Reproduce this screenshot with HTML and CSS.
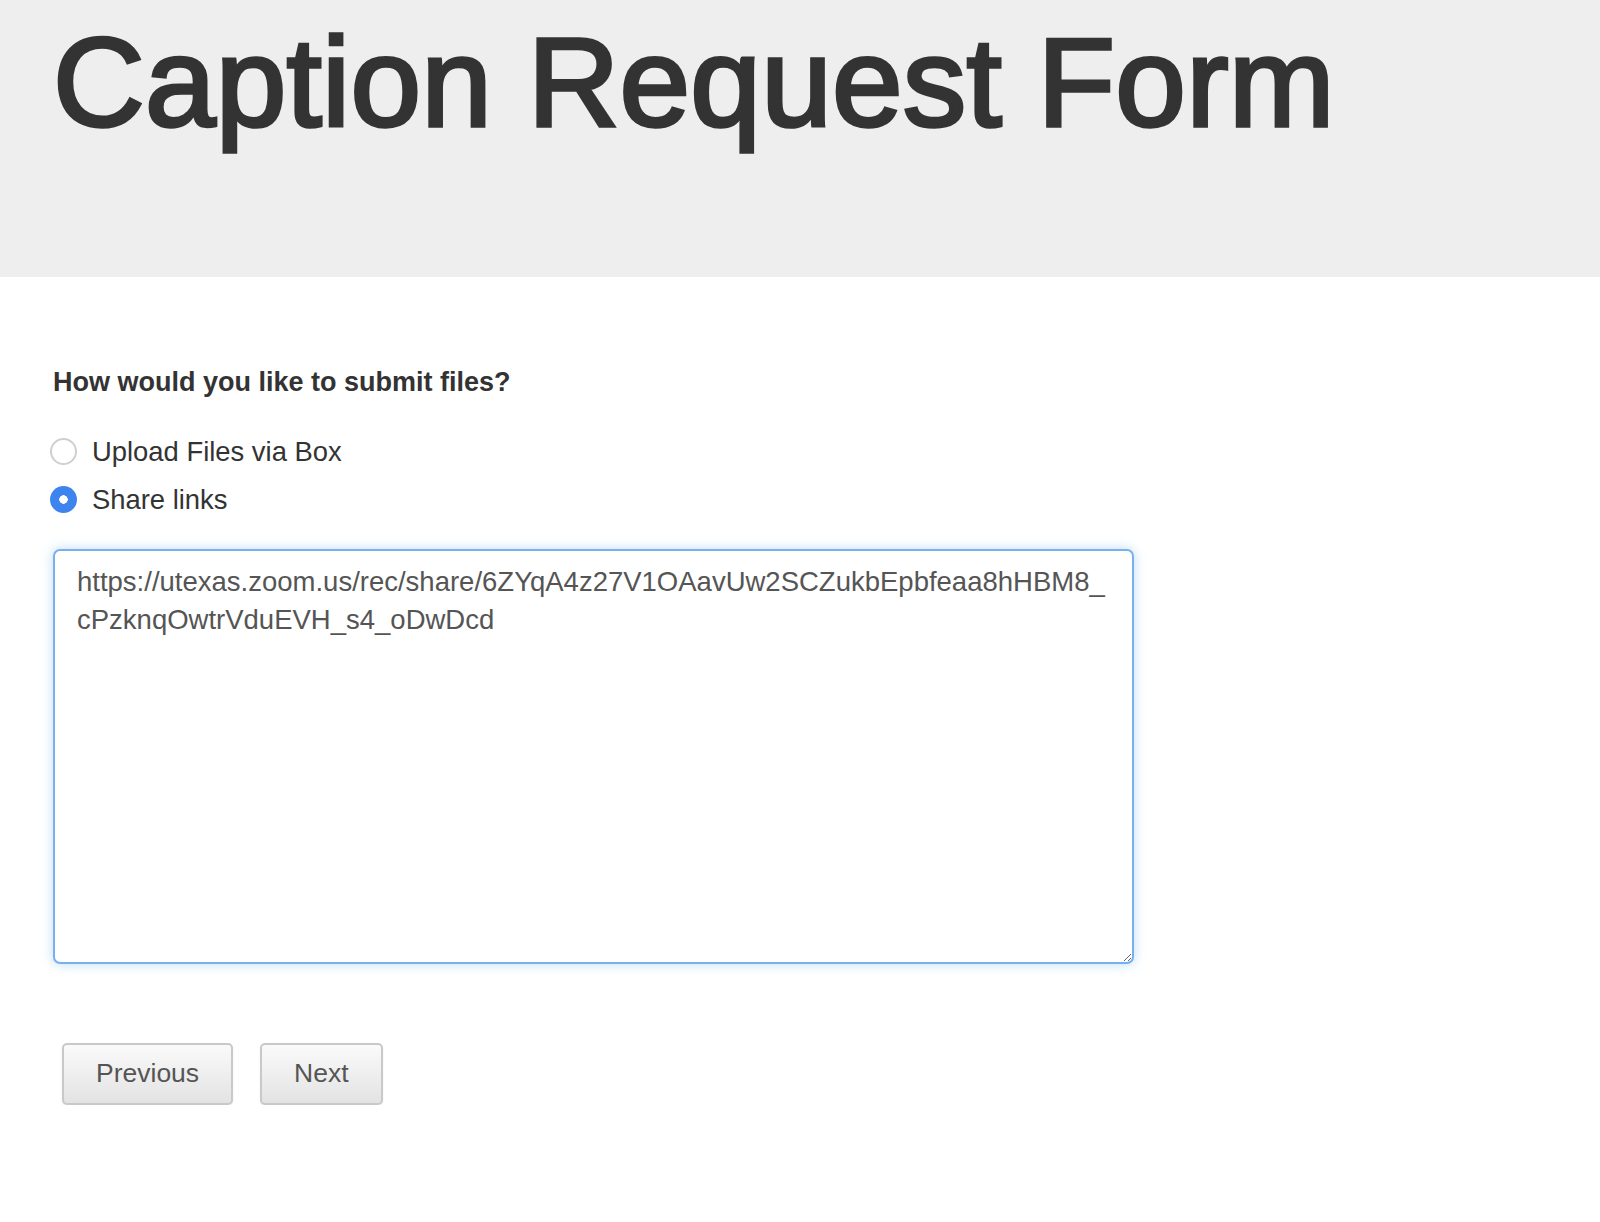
FILE: index.html
```
<!DOCTYPE html>
<html>
<head>
	<meta charset="utf-8">
	<title>Caption Request Form</title>
	<link rel="stylesheet" href="styles.css">
</head>
<body>
	<!-- 标题 -->
	<div class="jumbo">
		<h1>Caption Request Form</h1>
	</div>
	<div class="main">
		<form class="step">
			<label class="question">How would you like to submit files?</label>
			<div class="choices">
				<label class="choice"><input type="radio" name="how" value="box"><span>Upload Files via Box</span></label>
				<label class="choice"><input type="radio" name="how" value="links" checked><span>Share links</span></label>
			</div>
			<textarea class="links" name="links">https://utexas.zoom.us/rec/share/6ZYqA4z27V1OAavUw2SCZukbEpbfeaa8hHBM8_cPzknqOwtrVduEVH_s4_oDwDcd</textarea>
			<div class="nav">
				<input type="button" class="btn" value="Previous">
				<input type="button" class="btn" value="Next">
			</div>
		</form>
	</div>
</body>
</html>
```

FILE: styles.css
```
html,body{
	margin: 0;
	background: #fff;
	font-family: "Liberation Sans", Arial, sans-serif;
	color: #333;
}
.jumbo{
	height: 277px;
	background: #eee;
	padding-left: 53px;
	box-sizing: border-box;
	overflow: hidden;
}
.jumbo h1{
	margin: 19px 0 0;
	font-size: 127px;
	line-height: 127px;
	font-weight: normal;
	letter-spacing: 0.2px;
	-webkit-text-stroke: 3.5px #333;
	color: #333;
}
.main{
	padding: 86px 0 0 53px;
}
.question{
	display: block;
	font-size: 27px;
	font-weight: bold;
	line-height: 38.6px;
}
.choices{
	margin-top: 26px;
}
.choice{
	display: flex;
	align-items: center;
	height: 48px;
	font-size: 27.4px;
	color: #333;
	margin-left: -3px;
}
.choice input{
	-webkit-appearance: none;
	appearance: none;
	width: 27px;
	height: 27px;
	margin: 0 15px 0 0;
	border: 2px solid #cfcfcf;
	border-radius: 50%;
	background: #fff;
	box-sizing: border-box;
}
.choice input:checked{
	border: none;
	background: radial-gradient(circle, #fff 0 4px, #3d84ee 4.5px);
}
.links{
	display: block;
	width: 1081px;
	height: 415px;
	margin-top: 25px;
	padding: 12px 22px;
	box-sizing: border-box;
	border: 2px solid #78b0ee;
	border-radius: 7px;
	box-shadow: 0 0 12px rgba(102,175,233,0.45);
	font-family: "Liberation Sans", Arial, sans-serif;
	font-size: 27.5px;
	line-height: 38.6px;
	color: #555;
	resize: vertical;
	outline: none;
}
.nav{
	display: flex;
	gap: 27px;
	margin-top: 79px;
	padding-left: 9px;
}
.btn{
	height: 62px;
	padding: 0 32px;
	font-family: "Liberation Sans", Arial, sans-serif;
	font-size: 26.5px;
	color: #555;
	border: 2px solid #c9c9c9;
	border-radius: 5px;
	background-image: linear-gradient(#fafafa, #e3e3e3);
	box-shadow: 0 1px 2px rgba(0,0,0,0.08);
}
```
